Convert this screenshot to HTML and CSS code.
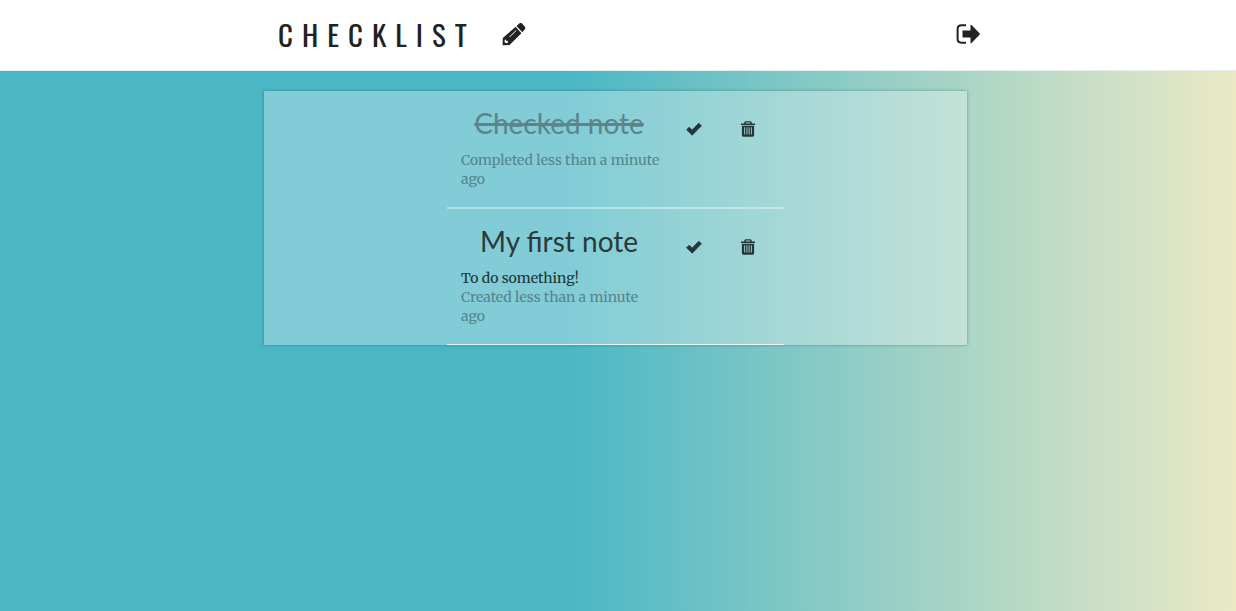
FILE: index.html
```html
<!DOCTYPE html>
<html lang="en">
<head>
<meta charset="utf-8">
<meta name="viewport" content="width=device-width, initial-scale=1">
<title>Checklist</title>
<link rel="stylesheet" href="styles.css">
</head>
<body>
<svg class="sprite" aria-hidden="true">
  <symbol id="icon-ok" viewBox="0 0 16 16"><path d="M.6 8.800 3.200 6.200 6.200 9 12.800 2.200 15.400 4.800 6.200 14.200Z" stroke="currentColor" stroke-width="0.8" stroke-linejoin="round"/></symbol>
  <symbol id="icon-trash" viewBox="0 0 16 16"><path fill-rule="evenodd" d="M4.200 2.500V1.800Q4.200 .2 5.800 .2h4.400q1.600 0 1.600 1.600v.7H14.600q.5 0 .5.500V4H.9V3q0-.5.500-.5ZM5.800 2.500h4.400V1.500H5.800ZM1.900 4.800h12.200v9.400q0 1.600-1.600 1.600h-9q-1.600 0-1.600-1.600ZM4.200 6.200v7.300h.9V6.200Zm2.300 0v7.300h.9V6.200Zm2.200 0v7.300h.9V6.200Zm2.200 0v7.300h.9V6.200Z"/></symbol>
</svg>
<header class="topbar">
  <div class="topbar-inner">
    <h1 class="brand">CHECKLIST</h1>
    <button class="icon-button" type="button" aria-label="New note">
      <svg class="icon-large" viewBox="0 0 24 24"><path fill-rule="evenodd" d="M.6 23.200.8 16 13.600 4.800 19.400 11.300 7.600 23ZM2.700 18 2.500 20 4 21.200 5.700 21 6 19.100 4.200 18.800 4 17.500ZM7.200 14.700 7.700 15.200 14.400 8.800 13.900 8.300ZM14.500 3.900 17.600 1.200Q18.800.3 20 1.500L22.900 4.700Q23.900 6 22.900 7.200L20.300 10.300Z"/></svg>
    </button>
    <button class="icon-button icon-button-end" type="button" aria-label="Log out">
      <svg class="icon-large" viewBox="0 0 24 24"><path d="M10 3.300H5.500Q1.600 3.300 1.600 7.200V16.800Q1.600 20.700 5.500 20.700H10" fill="none" stroke="currentColor" stroke-width="2"/><path d="M6.500 8.500H14.500V3Q15 2.600 15.500 3L23.500 11.200Q24.200 12 23.500 12.800L15.500 21Q15 21.400 14.500 21V15.500H6.500Z"/></svg>
    </button>
  </div>
</header>
<main class="content">
  <section class="card">
    <ul class="notes">
      <li class="note">
        <div class="note-body">
          <h2 class="note-title note-title-done">Checked note</h2>
          <p class="note-time">Completed less than a minute ago</p>
        </div>
        <button class="note-action" type="button" aria-label="Check Checked note"><svg class="icon-small"><use href="#icon-ok"/></svg></button>
        <button class="note-action" type="button" aria-label="Delete Checked note"><svg class="icon-small"><use href="#icon-trash"/></svg></button>
      </li>
      <li class="note">
        <div class="note-body">
          <h2 class="note-title">My first note</h2>
          <p class="note-text">To do something!</p>
          <p class="note-time">Created less than a minute ago</p>
        </div>
        <button class="note-action" type="button" aria-label="Check My first note"><svg class="icon-small"><use href="#icon-ok"/></svg></button>
        <button class="note-action" type="button" aria-label="Delete My first note"><svg class="icon-small"><use href="#icon-trash"/></svg></button>
      </li>
    </ul>
  </section>
</main>
</body>
</html>
```
FILE: styles.css
```css
* { box-sizing: border-box; }

body {
  margin: 0;
  min-height: 100vh;
  color: #222;
  font-family: Merriweather, "DejaVu Serif Condensed", "DejaVu Serif", serif;
  font-size: 14px;
  line-height: 19px;
  background: linear-gradient(90deg, #4bb7c5 46%, #ebe9c5 100%);
}

h1, h2, p, ul { margin: 0; padding: 0; }

button {
  display: flex;
  padding: 0;
  border: 0;
  color: inherit;
  background: none;
  cursor: pointer;
}

svg { fill: currentColor; }

.sprite { display: none; }

.topbar {
  padding: 14px 0 16px 22px;
  background: #fff;
  border-bottom: 1px solid #e4f0f0;
}

.topbar-inner {
  display: flex;
  align-items: center;
  max-width: 702px;
  margin: 0 auto;
}

.brand {
  margin-right: 26px;
  font-family: Oswald, "Liberation Sans Narrow", "Liberation Sans", sans-serif;
  font-size: 29px;
  font-weight: 400;
  line-height: 40px;
  letter-spacing: 9px;
}

.icon-large { width: 24px; height: 24px; }

.icon-button-end { margin-left: auto; }

.content { padding: 20px 5px 20px 0; }

.card {
  display: flex;
  justify-content: center;
  max-width: 703px;
  margin: 0 auto;
  background: rgba(255, 255, 255, 0.3);
  box-shadow: 0 0 3px rgba(0, 60, 60, 0.4);
}

.notes {
  width: 337px;
  list-style: none;
}

.note {
  display: flex;
  align-items: flex-start;
  padding: 14px 9px 18px 14px;
  border-bottom: 2px solid rgba(255, 255, 255, 0.4);
}

.note:last-child { border-bottom: 1px solid rgba(255, 255, 255, 0.8); }

.note-body { width: 200px; }

.note-title {
  margin-bottom: 10px;
  padding-right: 4px;
  font-family: Lato, sans-serif;
  font-size: 28px;
  font-weight: 400;
  line-height: 36px;
  text-align: center;
  color: #2b393b;
}

.note-title-done {
  color: #5c858b;
  text-decoration: line-through 3px;
}

.note-text { color: #1f3538; }

.note-time { color: #56858b; }

.note-action {
  justify-content: center;
  width: 54px;
  margin-top: 16px;
  color: #23373a;
}

.note-action:first-of-type { margin-left: 6px; }

.icon-small { width: 16px; height: 16px; }
```
